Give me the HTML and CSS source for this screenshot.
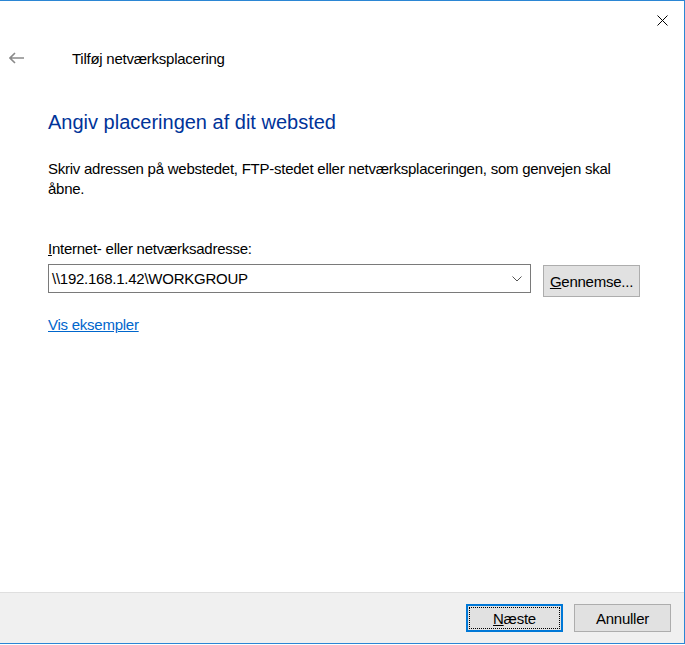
FILE: index.html
```html
<!DOCTYPE html>
<html lang="da">
<head>
<meta charset="utf-8">
<title>Tilføj netværksplacering</title>
<link rel="stylesheet" href="styles.css">
</head>
<body>
<div class="window">
  <div class="titlebar">
    <button class="close" aria-label="Luk">
      <svg width="11" height="11" viewBox="0 0 11 11"><path d="M0.5 0.5 L10.5 10.5 M10.5 0.5 L0.5 10.5" stroke="#000" stroke-width="1" fill="none"/></svg>
    </button>
  </div>
  <div class="header">
    <span class="back">
      <svg width="16" height="12" viewBox="0 0 16 12"><path d="M1 6 H15 M6 1 L1 6 L6 11" stroke="#8a8a8a" stroke-width="1.6" fill="none"/></svg>
    </span>
    <span class="title">Tilføj netværksplacering</span>
  </div>
  <div class="content">
    <h1 class="heading">Angiv placeringen af dit websted</h1>
    <p class="desc">Skriv adressen på webstedet, FTP-stedet eller netværksplaceringen, som genvejen skal åbne.</p>
    <label class="label"><u>I</u>nternet- eller netværksadresse:</label>
    <div class="row">
      <div class="combo">
        <span class="value">\\192.168.1.42\WORKGROUP</span>
        <svg class="chev" width="10" height="6" viewBox="0 0 10 6"><path d="M0.5 0.5 L5 5 L9.5 0.5" stroke="#555" stroke-width="1" fill="none"/></svg>
      </div>
      <button class="btn browse"><u>G</u>ennemse...</button>
    </div>
    <a class="link" href="#">Vis eksempler</a>
  </div>
  <div class="footer">
    <button class="btn primary"><span class="focus"><u>N</u>æste</span></button>
    <button class="btn">Annuller</button>
  </div>
</div>
</body>
</html>
```
FILE: styles.css
```css
html, body {
  margin: 0;
  padding: 0;
  background: #ffffff;
}
body {
  font-family: "Liberation Sans", Arial, sans-serif;
  font-size: 15px;
  letter-spacing: -0.25px;
  color: #000;
}
.window {
  box-sizing: border-box;
  width: 685px;
  height: 644px;
  border-top: 1px solid #2b86d4;
  border-right: 1px solid #2b86d4;
  border-bottom: 1px solid #2b86d4;
  background: #fff;
  display: flex;
  flex-direction: column;
}
.titlebar {
  height: 38px;
  display: flex;
  justify-content: flex-end;
  align-items: flex-start;
}
.close {
  border: 0;
  background: transparent;
  width: 44px;
  height: 38px;
  padding: 0;
  display: flex;
  align-items: center;
  justify-content: center;
}
.header {
  display: flex;
  align-items: center;
  height: 38px;
}
.back {
  width: 72px;
  padding-left: 9px;
  box-sizing: border-box;
  display: flex;
  align-items: center;
}
.title {
  font-size: 15px;
}
.content {
  padding-left: 48px;
  flex: 1;
  display: flex;
  flex-direction: column;
  align-items: flex-start;
}
.heading {
  margin: 32px 0 0 0;
  font-weight: normal;
  font-size: 20px;
  line-height: 26px;
  letter-spacing: 0;
  color: #003399;
}
.desc {
  margin: 24px 0 0 0;
  width: 590px;
  line-height: 20px;
}
.label {
  margin-top: 40px;
  line-height: 20px;
}
.row {
  margin-top: 5px;
  display: flex;
  align-items: flex-start;
  gap: 12px;
}
.combo {
  box-sizing: border-box;
  width: 483px;
  height: 29px;
  border: 1px solid #7a7a7a;
  display: flex;
  align-items: center;
  justify-content: space-between;
  padding: 0 8px 0 3px;
}
.btn {
  font-family: inherit;
  font-size: 15px;
  letter-spacing: -0.25px;
  box-sizing: border-box;
  width: 97px;
  height: 28px;
  background: #e1e1e1;
  border: 1px solid #adadad;
  padding: 0;
  color: #000;
}
.browse {
  height: 32px;
  margin-top: 1px;
}
.link {
  margin-top: 18px;
  color: #0066cc;
  line-height: 20px;
}
.footer {
  height: 51px;
  box-sizing: border-box;
  border-top: 1px solid #dfdfdf;
  background: #f0f0f0;
  display: flex;
  justify-content: flex-end;
  align-items: flex-start;
  gap: 11px;
  padding: 11px 13px 0 0;
}
.primary {
  border: 2px solid #0078d7;
  padding: 1px;
  display: flex;
}
.focus {
  flex: 1;
  border: 1px dotted #000;
  display: flex;
  align-items: center;
  justify-content: center;
}
```
